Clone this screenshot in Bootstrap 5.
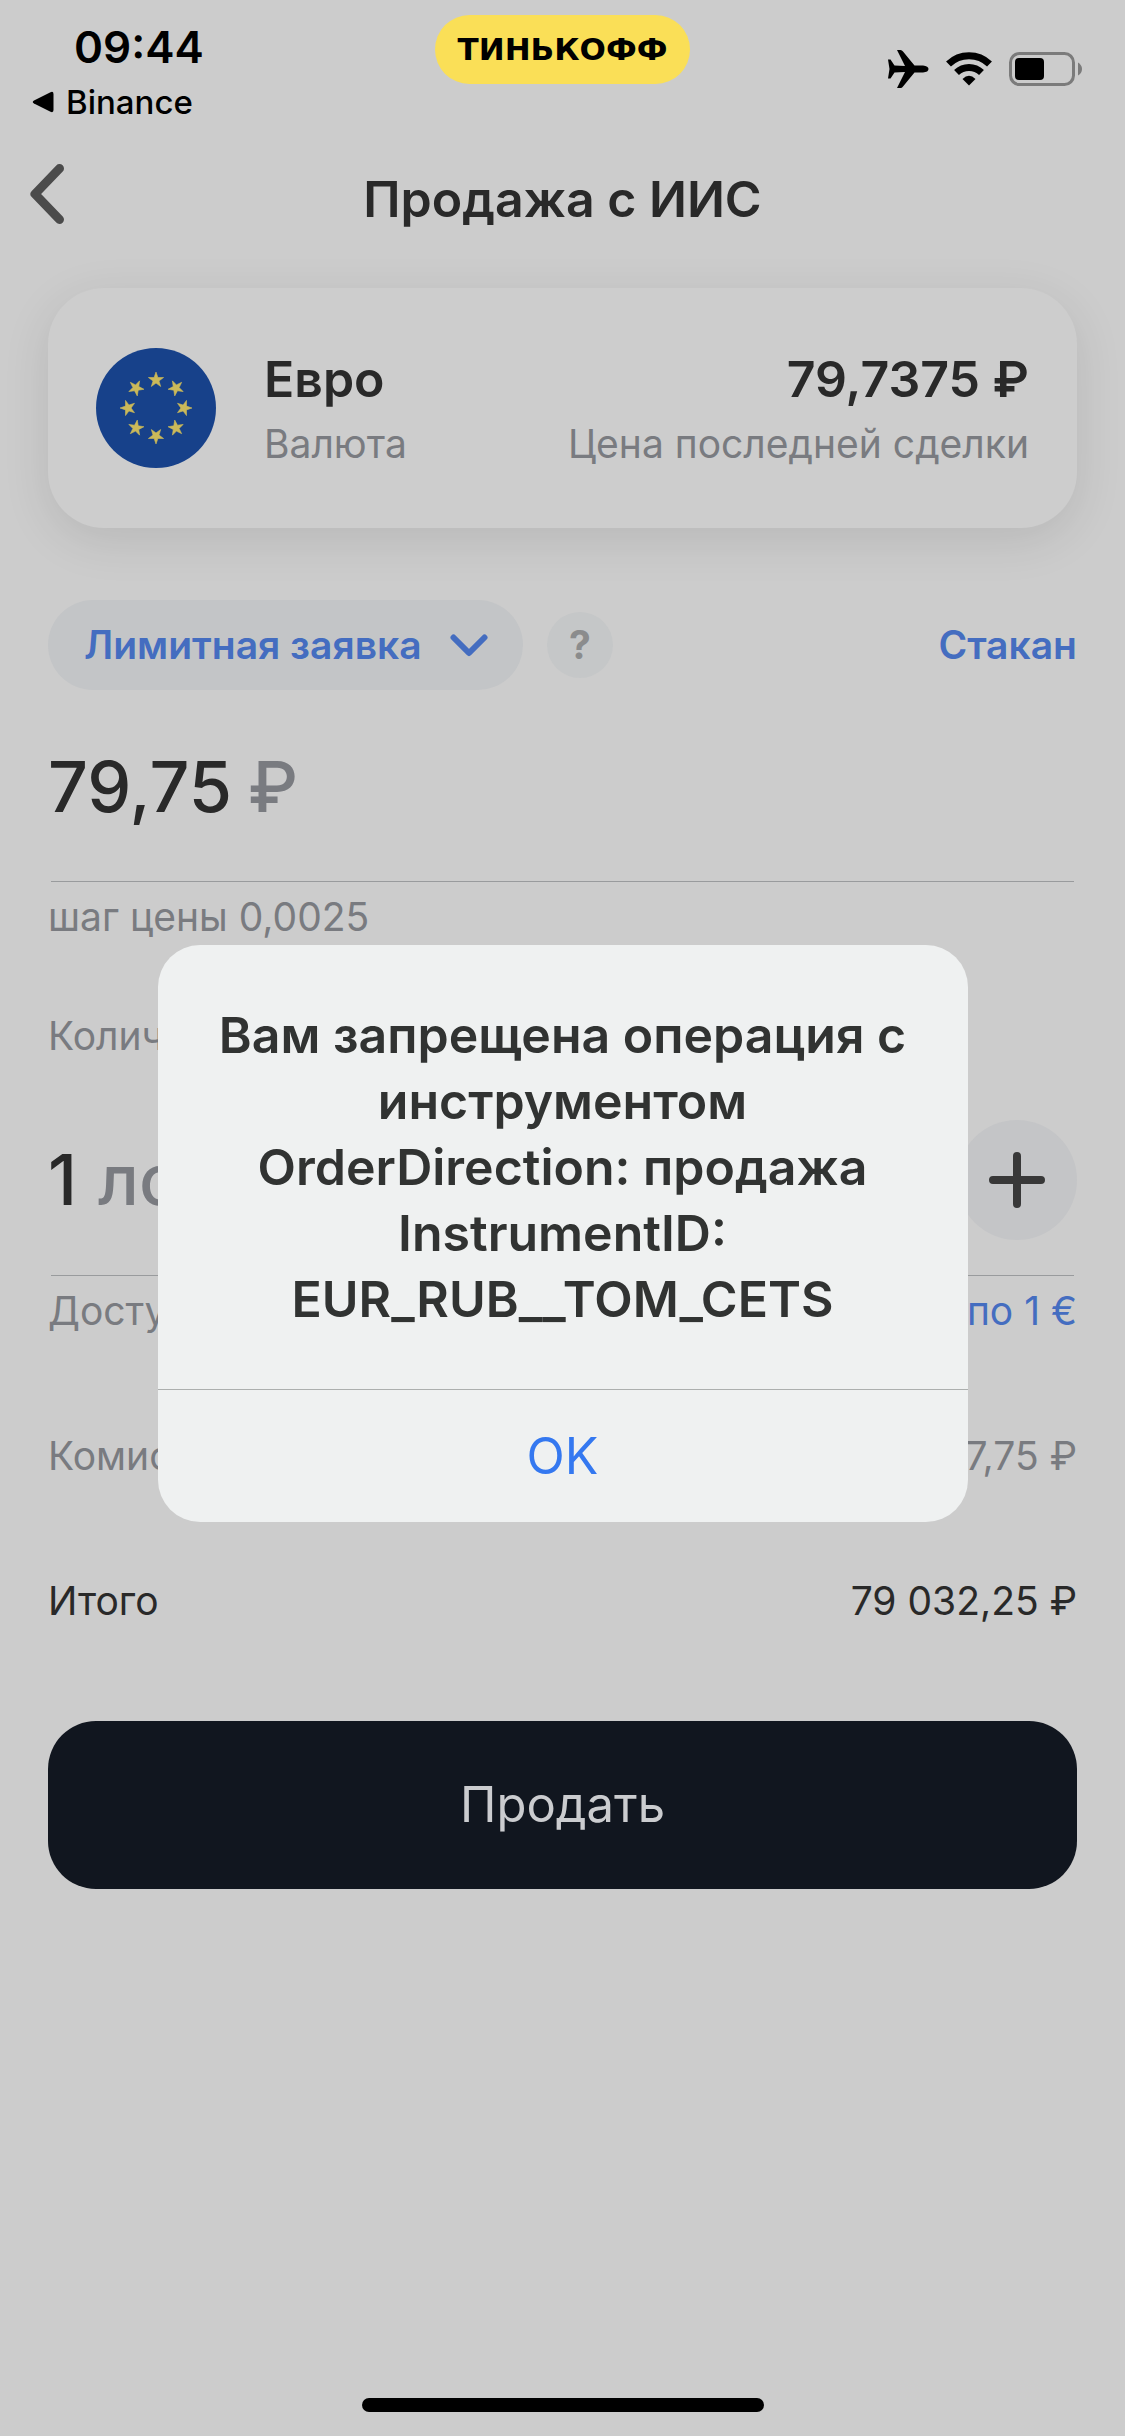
<!DOCTYPE html>
<html lang="ru">
<head>
<meta charset="utf-8">
<meta name="viewport" content="width=device-width, initial-scale=1">
<title>Продажа с ИИС</title>
<link href="https://cdn.jsdelivr.net/npm/bootstrap@5.3.0/dist/css/bootstrap.min.css" rel="stylesheet">
<style>
  :root { --ink: #292929; --muted: #797b80; --accent: #446dc0; --chip: #c3c5c7; --surface: #cccccc; }
  body { font-family: Inter, "Liberation Sans", sans-serif; font-size: 39px; line-height: 50px; color: var(--ink); background: var(--surface); }
  .screen { min-height: 100vh; padding-bottom: 24px; }
  .gutter { padding-left: 48px; padding-right: 48px; }
  .ink-muted { color: var(--muted); }
  .ink-accent, .ink-accent:hover { color: var(--accent); }
  .title-text { font-size: 50px; line-height: 62px; font-weight: 600; }

  .status { color: #000; padding-top: 15px; grid-template-columns: 1fr auto 1fr; }
  .clock { font-size: 44px; line-height: 54px; font-weight: 600; margin-top: 5px; padding-left: 74px; }
  .back-app { font-size: 33px; line-height: 40px; font-weight: 500; margin-top: 8px; padding-left: 32px; gap: 12px; }
  .brand { background: #fadf57; border-radius: 35px; width: 255px; height: 69px; font: 700 31px/69px "DejaVu Sans", sans-serif; }
  .indicators { padding-right: 42px; padding-top: 35px; gap: 17px; }

  .nav-row { height: 154px; }
  .nav-row .side { flex: 1 1 0; }
  .back-link { margin-left: 24px; }

  .asset { border-radius: 56px; padding: 60px 48px 55px; margin-top: 12px; gap: 48px; background: #cdcdcd; box-shadow: 0 12px 48px rgba(0, 0, 0, .1); }
  .asset-sub { line-height: 58px; margin-top: 5px; }

  .order-type { margin-top: 72px; gap: 24px; font-weight: 600; }
  .type-select { appearance: none; border: 0; background: var(--chip); color: var(--accent); border-radius: 45px; height: 90px; padding: 0 101px 0 36px; font-weight: 600; }
  .type-arrow { right: 35px; top: 34px; pointer-events: none; }
  .help { width: 66px; height: 66px; background: #c5c7c8; color: #8b8c8d; border: 0; font-weight: 700; line-height: 66px; padding: 0; }

  .rule-line { margin: 0 3px 10px; border-top: 1px solid #999b9d; opacity: 1; }
  .amount { font-size: 70px; line-height: 90px; font-weight: 500; }
  .amount input { border: 0; padding: 0; background: transparent; color: var(--ink); font-weight: 500; height: 90px; }
  .price-row { margin-top: 52px; padding-bottom: 49px; }
  .price-row input { width: 200px; }
  .qty-row { margin-top: 59px; padding-bottom: 35px; }
  .qty-row input { width: 50px; }
  .qty-label { margin-top: 69px; }
  .round-btn { width: 120px; height: 120px; background: #c4c5c7; border: 0; padding: 0; }
  .summary { margin-top: 95px; }

  .sell, .sell:hover { background: #11161f; color: #cbcccf; border: 0; border-radius: 48px; height: 168px; font-size: 49px; margin-top: 95px; }
  .home-bar { width: 402px; height: 14px; border-radius: 7px; background: #000; }

  .alert-layer { padding-top: 31px; }
  .alert-layer .modal-dialog { max-width: 810px; margin-top: 0; margin-bottom: 0; min-height: 100%; }
  .alert-layer .modal-content { background: #eff1f1; border: 0; border-radius: 42px; color: #313332; }
  .alert-text { font-size: 50px; line-height: 66px; font-weight: 600; padding: 57px 48px; margin: 0; }
  .alert-ok, .alert-ok:hover { font-size: 50px; line-height: 66px; color: #3478f0; padding: 33px 0; border: 0; border-top: 1px solid #acafae; border-radius: 0; background: transparent; }
</style>
</head>
<body>
<div class="screen d-flex flex-column">
  <header class="status d-grid align-items-start">
    <div>
      <div class="clock">09:44</div>
      <a href="#" class="back-app d-flex align-items-center text-reset text-decoration-none">
        <svg width="22" height="22" viewBox="0 0 22 22" aria-hidden="true"><path d="M2 9.500 18.500 1.200Q21.500 0 21.500 3V19Q21.500 22 18.500 20.800L2 12.500Q-.5 11 2 9.500Z"/></svg>
        Binance
      </a>
    </div>
    <div class="brand text-center">ТИНЬКОФФ</div>
    <div class="indicators d-flex justify-content-end align-items-center">
      <svg width="41" height="38" viewBox="0 0 41 38" role="img" aria-label="Авиарежим"><path d="M0 9.500H2.500L6.500 15.500 17 16 9 0H12.500Q14 0 15 1.500L26.500 15.500H35Q40.500 16 40.500 19T35 22.500H26.500L15 36.500Q14 38 12.500 38H9L17 22 6.500 22.500 2.500 28.500H0L1.500 19Z"/></svg>
      <svg width="46" height="34" viewBox="0 0 46 34" role="img" aria-label="Wi-Fi"><g fill="none" stroke="#000" stroke-width="7"><path d="M2.500 12A29.500 29.500 0 0 1 43.500 12"/><path d="M10.500 20.500A18 18 0 0 1 35.500 20.500"/></g><path d="M16.500 27Q23 20.500 29.500 27L23 33.500Z"/></svg>
      <svg width="74" height="34" viewBox="0 0 74 34" role="img" aria-label="Батарея"><rect x="1.500" y="1.500" width="63" height="31" rx="9" fill="none" stroke="#7b7b7b" stroke-width="3"/><rect x="6" y="6" width="29" height="22" rx="4"/><path d="M69 10.500Q73 13 73 17T69 23.500Z" fill="#7b7b7b"/></svg>
    </div>
  </header>

  <nav class="nav-row d-flex align-items-center">
    <div class="side">
      <a href="#" class="back-link d-block" aria-label="Назад"><svg class="d-block" width="46" height="74" viewBox="0 0 46 74"><path d="M35.500 6.500 11 32 35.500 57.500" fill="none" stroke="#4b4b4b" stroke-width="9" stroke-linecap="round" stroke-linejoin="round"/></svg></a>
    </div>
    <h1 class="title-text mb-0">Продажа с ИИС</h1>
    <div class="side"></div>
  </nav>

  <main class="gutter">
    <section class="asset d-flex align-items-start">
      <svg class="flex-shrink-0" width="120" height="120" viewBox="-60 -60 120 120" role="img" aria-label="Флаг ЕС">
        <defs><path id="star" d="M0-8 1.900-2.500 7.600-2.500 3 .9 4.700 6.500 0 3.100-4.700 6.500-3 .9-7.600-2.500-1.900-2.500Z"/></defs>
        <circle r="60" fill="#17418a"/>
        <g fill="#cbb959" stroke="#cbb959" stroke-width=".6">
          <use href="#star" transform="translate(0 -28)"/>
          <use href="#star" transform="translate(20 -20) rotate(45)"/>
          <use href="#star" transform="translate(28 0) rotate(90)"/>
          <use href="#star" transform="translate(20 20) rotate(135)"/>
          <use href="#star" transform="translate(0 28) rotate(180)"/>
          <use href="#star" transform="translate(-20 20) rotate(225)"/>
          <use href="#star" transform="translate(-28 0) rotate(270)"/>
          <use href="#star" transform="translate(-20 -20) rotate(315)"/>
        </g>
      </svg>
      <div>
        <div class="title-text">Евро</div>
        <div class="asset-sub ink-muted">Валюта</div>
      </div>
      <div class="ms-auto text-end">
        <div class="title-text">79,7375 ₽</div>
        <div class="asset-sub ink-muted">Цена последней сделки</div>
      </div>
    </section>

    <div class="order-type d-flex align-items-center">
      <div class="position-relative">
        <select class="type-select d-block" aria-label="Тип заявки"><option>Лимитная заявка</option></select>
        <svg class="type-arrow position-absolute" width="38" height="24" viewBox="0 0 38 24" aria-hidden="true"><path d="M3.500 3.500 19 19 34.500 3.500" fill="none" stroke="#446dc0" stroke-width="6" stroke-linecap="round" stroke-linejoin="round"/></svg>
      </div>
      <button type="button" class="help rounded-circle" aria-label="Справка">?</button>
      <a href="#" class="ink-accent text-decoration-none ms-auto">Стакан</a>
    </div>

    <div class="price-row amount d-flex">
      <input type="text" id="price" value="79,75" aria-label="Цена">
      <label for="price" class="ink-muted">₽</label>
    </div>
    <hr class="rule-line">
    <div class="ink-muted">шаг цены 0,0025</div>

    <label for="qty" class="qty-label ink-muted d-block">Количество</label>
    <div class="qty-row amount d-flex align-items-center">
      <input type="text" id="qty" value="1">
      <span class="ink-muted">лот</span>
      <button type="button" class="round-btn rounded-circle ms-auto me-4" aria-label="Меньше"><svg class="d-block mx-auto" width="60" height="60" viewBox="0 0 60 60"><path d="M6 30H54" stroke="#383838" stroke-width="8" stroke-linecap="round"/></svg></button>
      <button type="button" class="round-btn rounded-circle" aria-label="Больше"><svg class="d-block mx-auto" width="60" height="60" viewBox="0 0 60 60"><path d="M6 30H54M30 6V54" stroke="#383838" stroke-width="8" stroke-linecap="round"/></svg></button>
    </div>
    <hr class="rule-line">
    <div class="d-flex justify-content-between">
      <span class="ink-muted">Доступно</span><span class="ink-accent">1000 по 1 €</span>
    </div>
    <div class="summary d-flex justify-content-between ink-muted"><span>Комиссия</span><span>717,75 ₽</span></div>
    <div class="summary d-flex justify-content-between"><span>Итого</span><span>79 032,25 ₽</span></div>
    <button type="button" class="btn sell w-100">Продать</button>
  </main>

  <div class="home-bar mt-auto mx-auto"></div>
</div>

<div class="modal d-block alert-layer" tabindex="-1" role="alertdialog" aria-labelledby="alertText">
  <div class="modal-dialog modal-dialog-centered">
    <div class="modal-content overflow-hidden">
      <p class="alert-text text-center" id="alertText">Вам запрещена операция с инструментом<br>OrderDirection: продажа<br>InstrumentID:<br>EUR_RUB__TOM_CETS</p>
      <button type="button" class="btn alert-ok w-100">OK</button>
    </div>
  </div>
</div>
<script src="https://cdn.jsdelivr.net/npm/bootstrap@5.3.0/dist/js/bootstrap.bundle.min.js"></script>
</body>
</html>
